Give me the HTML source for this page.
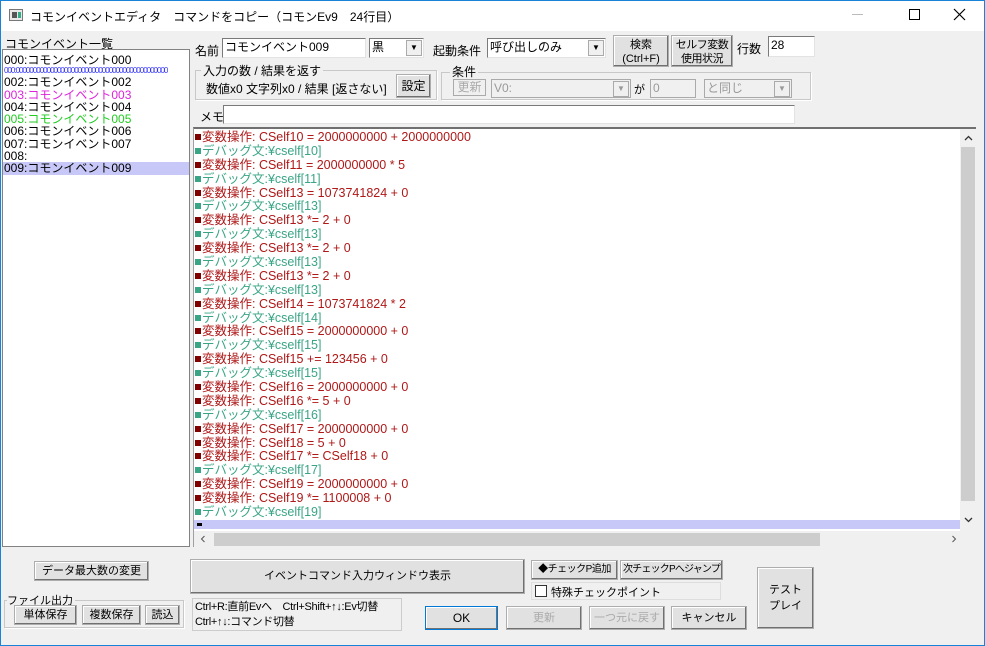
<!DOCTYPE html>
<html><head><meta charset="utf-8"><style>
*{box-sizing:border-box;margin:0;padding:0}
body{width:985px;height:646px;overflow:hidden;background:#f0f0f0;font-family:"Liberation Sans","Noto Sans CJK JP",sans-serif;font-size:12px;color:#000;position:relative}
.a{position:absolute;white-space:nowrap}
.win{position:absolute;left:0;top:0;width:985px;height:646px;border:1px solid #1883d7}
.title{position:absolute;left:1px;top:1px;width:983px;height:30px;background:#fff}
.inp{position:absolute;background:#fff;border:1px solid #7a7a7a;border-right-color:#e3e3e3;border-bottom-color:#e3e3e3;padding-left:2px;line-height:16px}
.btn{position:absolute;background:#e1e1e1;border:1px solid #adadad;box-shadow:inset -1px -1px 0 #707070,inset 1px 1px 0 #fff;text-align:center;font-size:11px;white-space:nowrap;overflow:hidden}
.grp{position:absolute;border:1px solid #c8c8c8;box-shadow:1px 1px 0 #fff}
.dd{position:absolute;width:16px;height:16px;right:1px;top:1px;background:#f0f0f0;border:1px solid #aaa;font-size:8px;text-align:center;line-height:14px}
.code{position:absolute;left:193px;top:127px;width:783px;height:420px;background:#fff;border-top:2px solid #707070;border-left:1px solid #a0a0a0}
.ln{height:13.9px;line-height:13.9px;font-size:12.5px;padding-left:1px;white-space:nowrap}
.r{color:#b01818}.r::before{content:"";display:inline-block;width:6px;height:6px;background:#800000;margin-right:1px;vertical-align:1px}
.g{color:#3aa585}.g::before{content:"";display:inline-block;width:6px;height:6px;background:#3aa585;margin-right:1px;vertical-align:1px}
.list{position:absolute;left:2px;top:49px;width:188px;height:498px;background:#fff;border:1px solid #828282;padding-top:4px}
.li{height:12.3px;line-height:12px;padding-left:1px;font-size:12px}
</style></head><body>
<div class="title"></div>
<div class="win"></div>
<svg class="a" style="left:9px;top:9px" width="14" height="12"><rect x="0.5" y="0.5" width="13" height="11" fill="#e8e8e8" stroke="#777"/><rect x="3" y="3" width="5" height="6" fill="#555"/><rect x="9" y="3" width="3" height="6" fill="#3a8"/></svg>
<div class="a" style="left:30px;top:8px;font-size:12px">コモンイベントエディタ　コマンドをコピー（コモンEv9　24行目）</div>
<div class="a" style="left:852px;top:14px;width:11px;border-top:1px solid #bbb"></div>
<div class="a" style="left:909px;top:9px;width:11px;height:11px;border:1px solid #000"></div>
<svg class="a" style="left:953px;top:8px" width="13" height="13"><path d="M1 1L12 12M12 1L1 12" stroke="#000" stroke-width="1.2"/></svg>

<div class="a" style="left:5px;top:35px">コモンイベント一覧</div>
<div class="list">
<div class="li">000:コモンイベント000</div>
<div class="li" style="color:#3333ff;font-size:8px;height:10px;line-height:10px;overflow:hidden;letter-spacing:-1px">000:00000000000000000000000000000000000000000000</div>
<div class="li">002:コモンイベント002</div>
<div class="li" style="color:#dd22dd">003:コモンイベント003</div>
<div class="li">004:コモンイベント004</div>
<div class="li" style="color:#22cc22">005:コモンイベント005</div>
<div class="li">006:コモンイベント006</div>
<div class="li">007:コモンイベント007</div>
<div class="li">008:</div>
<div class="li" style="background:#c8c8f8">009:コモンイベント009</div>
</div>

<div class="a" style="left:195px;top:42px">名前</div>
<div class="inp" style="left:222px;top:38px;width:144px;height:20px">コモンイベント009</div>
<div class="inp" style="left:369px;top:38px;width:55px;height:20px">黒<div class="dd">▼</div></div>
<div class="a" style="left:433px;top:42px">起動条件</div>
<div class="inp" style="left:487px;top:38px;width:119px;height:20px">呼び出しのみ<div class="dd">▼</div></div>
<div class="btn" style="left:613px;top:35px;width:56px;height:32px;line-height:14px;padding-top:2px">検索<br>(Ctrl+F)</div>
<div class="btn" style="left:671px;top:35px;width:62px;height:32px;line-height:14px;padding-top:2px;letter-spacing:-0.5px">セルフ変数<br>使用状況</div>
<div class="a" style="left:737px;top:40px">行数</div>
<div class="inp" style="left:768px;top:36px;width:47px;height:21px">28</div>

<div class="grp" style="left:195px;top:70px;width:242px;height:30px"></div>
<div class="a" style="left:201px;top:62px;background:#f0f0f0;padding:0 2px">入力の数 / 結果を返す</div>
<div class="a" style="left:206px;top:80px">数値x0 文字列x0 / 結果 [返さない]</div>
<div class="btn" style="left:396px;top:74px;width:35px;height:24px;line-height:22px;font-size:12px">設定</div>
<div class="grp" style="left:441px;top:72px;width:370px;height:28px"></div>
<div class="a" style="left:450px;top:63px;background:#f0f0f0;padding:0 2px">条件</div>
<div class="a" style="left:453px;top:79px;width:33px;height:17px;border:1px solid #aaa;color:#aaa;text-align:center;line-height:15px">更新</div>
<div class="inp" style="left:491px;top:79px;width:140px;height:19px;background:#f0f0f0;color:#999;border-color:#aaa">V0:<div class="dd" style="color:#999">▼</div></div>
<div class="a" style="left:634px;top:81px;font-size:11px">が</div>
<div class="inp" style="left:650px;top:79px;width:46px;height:19px;background:#f0f0f0;color:#999;border-color:#aaa">0</div>
<div class="inp" style="left:704px;top:79px;width:88px;height:19px;background:#f0f0f0;color:#999;border-color:#aaa">と同じ<div class="dd" style="color:#999">▼</div></div>
<div class="a" style="left:200px;top:108px">メモ</div>
<div class="inp" style="left:223px;top:105px;width:572px;height:19px"></div>

<div class="code">
<div style="height:2px"></div>
<div class="ln r">変数操作: CSelf10 = 2000000000 + 2000000000</div>
<div class="ln g">デバッグ文:¥cself[10]</div>
<div class="ln r">変数操作: CSelf11 = 2000000000 * 5</div>
<div class="ln g">デバッグ文:¥cself[11]</div>
<div class="ln r">変数操作: CSelf13 = 1073741824 + 0</div>
<div class="ln g">デバッグ文:¥cself[13]</div>
<div class="ln r">変数操作: CSelf13 *= 2 + 0</div>
<div class="ln g">デバッグ文:¥cself[13]</div>
<div class="ln r">変数操作: CSelf13 *= 2 + 0</div>
<div class="ln g">デバッグ文:¥cself[13]</div>
<div class="ln r">変数操作: CSelf13 *= 2 + 0</div>
<div class="ln g">デバッグ文:¥cself[13]</div>
<div class="ln r">変数操作: CSelf14 = 1073741824 * 2</div>
<div class="ln g">デバッグ文:¥cself[14]</div>
<div class="ln r">変数操作: CSelf15 = 2000000000 + 0</div>
<div class="ln g">デバッグ文:¥cself[15]</div>
<div class="ln r">変数操作: CSelf15 += 123456 + 0</div>
<div class="ln g">デバッグ文:¥cself[15]</div>
<div class="ln r">変数操作: CSelf16 = 2000000000 + 0</div>
<div class="ln r">変数操作: CSelf16 *= 5 + 0</div>
<div class="ln g">デバッグ文:¥cself[16]</div>
<div class="ln r">変数操作: CSelf17 = 2000000000 + 0</div>
<div class="ln r">変数操作: CSelf18 = 5 + 0</div>
<div class="ln r">変数操作: CSelf17 *= CSelf18 + 0</div>
<div class="ln g">デバッグ文:¥cself[17]</div>
<div class="ln r">変数操作: CSelf19 = 2000000000 + 0</div>
<div class="ln r">変数操作: CSelf19 *= 1100008 + 0</div>
<div class="ln g">デバッグ文:¥cself[19]</div>
<div style="height:9px;background:#c8c8f8;width:766px;position:relative"><div style="position:absolute;left:3px;top:3px;width:5px;height:3px;background:#000"></div></div>
<div class="a" style="left:0;top:402px;width:782px;height:16px;background:#f0f0f0"></div>
<div class="a" style="left:20px;top:404px;width:606px;height:13px;background:#cdcdcd"></div>
<svg class="a" style="left:6px;top:406px" width="6" height="8"><path d="M4.5 1L1.5 4L4.5 7" stroke="#555" fill="none"/></svg>
<svg class="a" style="left:757px;top:406px" width="6" height="8"><path d="M1.5 1L4.5 4L1.5 7" stroke="#555" fill="none"/></svg>
<div class="a" style="left:766px;top:0;width:16px;height:402px;background:#f0f0f0"></div>
<div class="a" style="left:767px;top:18px;width:14px;height:354px;background:#cdcdcd"></div>
<svg class="a" style="left:770px;top:6px" width="9" height="6"><path d="M1 5L4.5 1.5L8 5" stroke="#333" stroke-width="1.3" fill="none"/></svg>
<svg class="a" style="left:770px;top:388px" width="9" height="6"><path d="M1 1L4.5 4.5L8 1" stroke="#333" stroke-width="1.3" fill="none"/></svg>
</div>

<div class="btn" style="left:34px;top:561px;width:115px;height:20px;line-height:18px">データ最大数の変更</div>
<div class="grp" style="left:4px;top:600px;width:180px;height:28px"></div>
<div class="a" style="left:7px;top:592px;background:#f0f0f0;font-size:11px;padding-right:2px">ファイル出力</div>
<div class="btn" style="left:14px;top:605px;width:63px;height:20px;line-height:18px">単体保存</div>
<div class="btn" style="left:82px;top:605px;width:59px;height:20px;line-height:18px">複数保存</div>
<div class="btn" style="left:145px;top:605px;width:35px;height:20px;line-height:18px">読込</div>
<div class="btn" style="left:190px;top:559px;width:335px;height:35px;line-height:33px">イベントコマンド入力ウィンドウ表示</div>
<div class="a" style="left:192px;top:598px;width:210px;height:33px;border:1px solid #ccc;font-size:11px;line-height:15px;padding:1px 2px;letter-spacing:-0.3px">Ctrl+R:直前Evへ　Ctrl+Shift+↑↓:Ev切替<br>Ctrl+↑↓:コマンド切替</div>
<div class="btn" style="left:531px;top:560px;width:87px;height:20px;line-height:18px;font-size:10px;letter-spacing:-0.5px">◆チェックP追加</div>
<div class="btn" style="left:620px;top:560px;width:103px;height:20px;line-height:18px;font-size:10px;letter-spacing:-0.8px">次チェックPへジャンプ</div>
<div class="a" style="left:531px;top:582px;width:190px;height:18px;border:1px solid #ddd"></div>
<div class="a" style="left:535px;top:585px;width:12px;height:12px;border:1px solid #333;background:#fff"></div>
<div class="a" style="left:551px;top:584px;font-size:11px">特殊チェックポイント</div>
<div class="btn" style="left:425px;top:606px;width:73px;height:24px;line-height:22px;font-size:12px;border-color:#0078d7">OK</div>
<div class="btn" style="left:506px;top:606px;width:76px;height:24px;line-height:22px;color:#aaa">更新</div>
<div class="btn" style="left:589px;top:606px;width:76px;height:24px;line-height:22px;color:#aaa">一つ元に戻す</div>
<div class="btn" style="left:671px;top:606px;width:76px;height:24px;line-height:22px">キャンセル</div>
<div class="btn" style="left:757px;top:567px;width:57px;height:62px;line-height:16px;padding-top:14px">テスト<br>プレイ</div>
</body></html>
